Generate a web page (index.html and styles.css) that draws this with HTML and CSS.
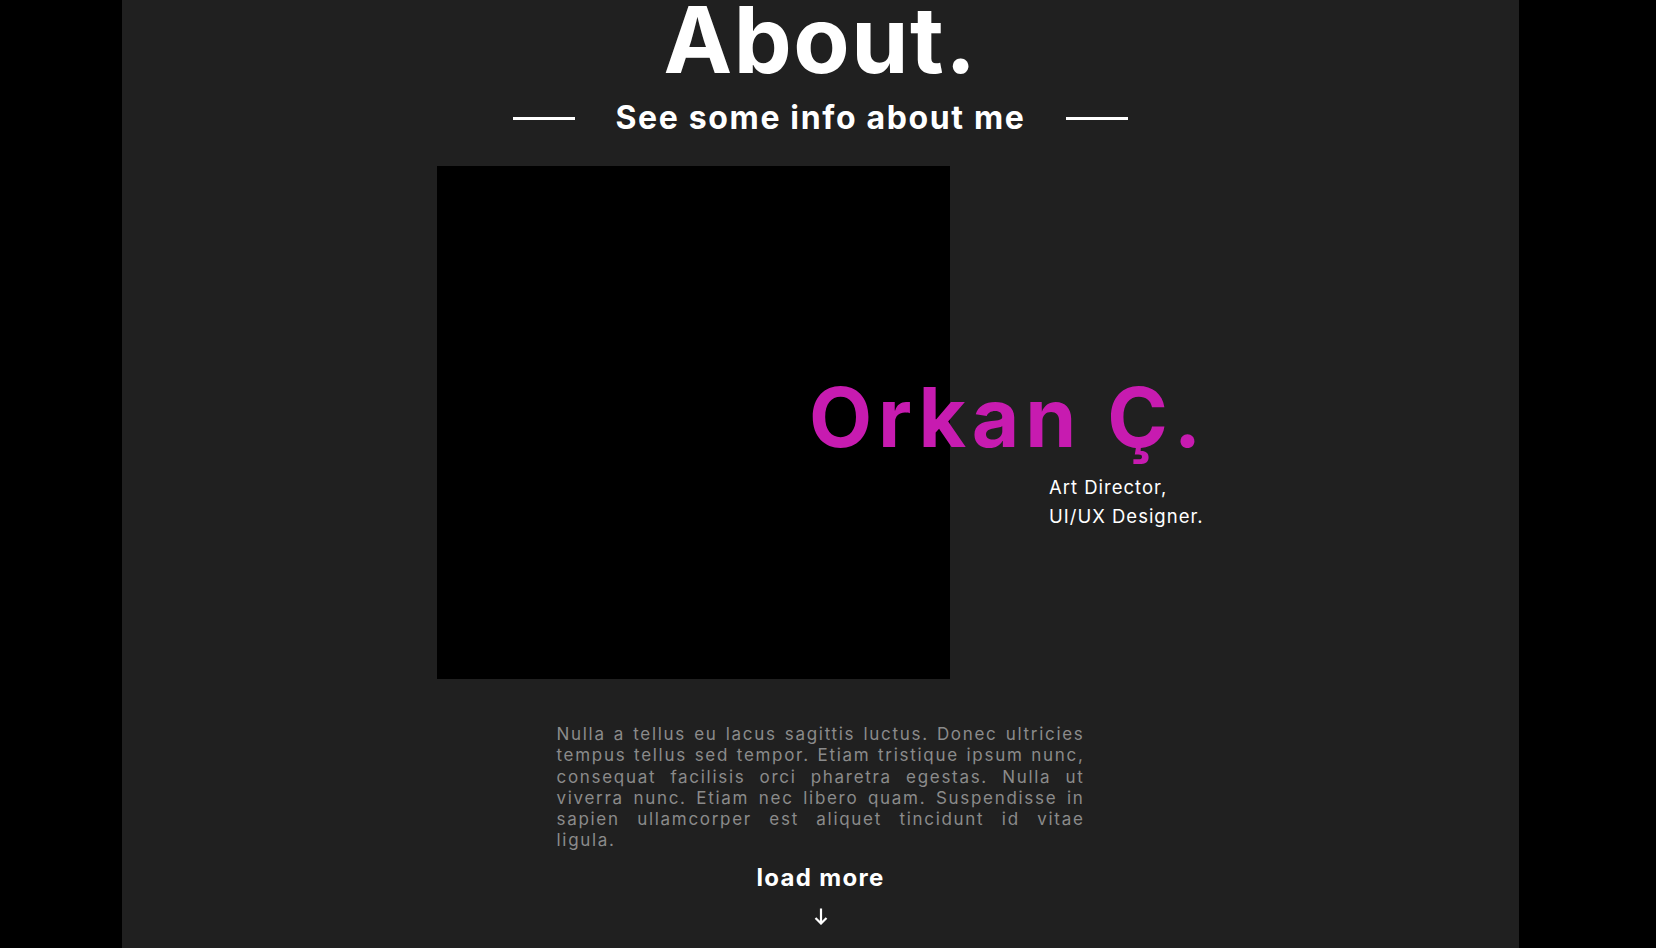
FILE: index.html
```html
<!DOCTYPE html>
<html lang="en">
<head>
<meta charset="utf-8">
<title>About</title>
<link rel="stylesheet" href="styles.css">
</head>
<body>
<main class="page">
  <section class="about">
    <h1 class="title">About.</h1>
    <div class="subtitle">
      <span class="rule"></span>
      <h2 class="subtitle-text">See some info about me</h2>
      <span class="rule"></span>
    </div>
    <div class="profile">
      <div class="photo"></div>
      <div class="info">
        <p class="name">Orkan Ç.</p>
        <p class="roles">Art Director,<br>UI/UX Designer.</p>
      </div>
    </div>
    <p class="bio">
      <span class="line">Nulla a tellus eu lacus sagittis luctus. Donec ultricies</span>
      <span class="line">tempus tellus sed tempor. Etiam tristique ipsum nunc,</span>
      <span class="line">consequat facilisis orci pharetra egestas. Nulla ut</span>
      <span class="line">viverra nunc. Etiam nec libero quam. Suspendisse in</span>
      <span class="line">sapien ullamcorper est aliquet tincidunt id vitae</span>
      <span class="line last">ligula.</span>
    </p>
    <a class="more" href="#">load more</a>
    <svg class="arrow" width="14" height="17" viewBox="0 0 14 17" aria-hidden="true">
      <path d="M7 0.5 V15.5 M1.5 10 L7 15.5 L12.5 10" fill="none" stroke="#fff" stroke-width="2.2"/>
    </svg>
  </section>
</main>
</body>
</html>
```

FILE: styles.css
```css
* { box-sizing: border-box; }

html, body {
  margin: 0;
  padding: 0;
  background: #000;
}

body {
  font-family: "Inter", "Liberation Sans", sans-serif;
  color: #fff;
  overflow: hidden;
}

.page {
  margin-left: 122px;
  width: 1397px;
  height: 948px;
  background: #202020;
  overflow: hidden;
}

.about {
  display: flex;
  flex-direction: column;
  align-items: center;
}

.title {
  margin: 0;
  font-size: 92px;
  line-height: 80px;
  font-weight: 700;
  letter-spacing: 1.5px;
}

.subtitle {
  display: flex;
  align-items: center;
  gap: 40px;
  margin-top: 18px;
}

.rule {
  width: 62px;
  height: 3px;
  background: #fff;
}

.subtitle-text {
  margin: 0;
  font-size: 32px;
  line-height: 40px;
  font-weight: 700;
  letter-spacing: 1.65px;
}

.profile {
  display: flex;
  align-items: flex-start;
  margin-top: 28px;
  width: 1397px;
  padding-left: 315px;
}

.photo {
  width: 513px;
  height: 513px;
  background: #000;
  flex: none;
}

.info {
  margin-left: -141px;
  margin-top: 212px;
}

.name {
  margin: 0;
  font-size: 82px;
  line-height: 80px;
  font-weight: 700;
  color: #c71bb0;
  letter-spacing: 5.8px;
  white-space: nowrap;
}

.roles {
  margin: 14.6px 0 0 240px;
  font-size: 18.5px;
  line-height: 29.3px;
  font-weight: 400;
  letter-spacing: 1px;
}

.bio {
  width: 528px;
  margin: 45px 0 0;
  font-size: 17px;
  line-height: 21.3px;
  letter-spacing: 1.7px;
  color: #8b8b8b;
}

.bio .line {
  display: block;
  white-space: nowrap;
  text-align: justify;
  text-align-last: justify;
}

.bio .line.last {
  text-align-last: left;
}

.more {
  margin-top: 11px;
  font-size: 24px;
  line-height: 30px;
  font-weight: 700;
  color: #fff;
  text-decoration: none;
  letter-spacing: 1.3px;
}

.arrow {
  display: block;
  margin-top: 15px;
}
```
